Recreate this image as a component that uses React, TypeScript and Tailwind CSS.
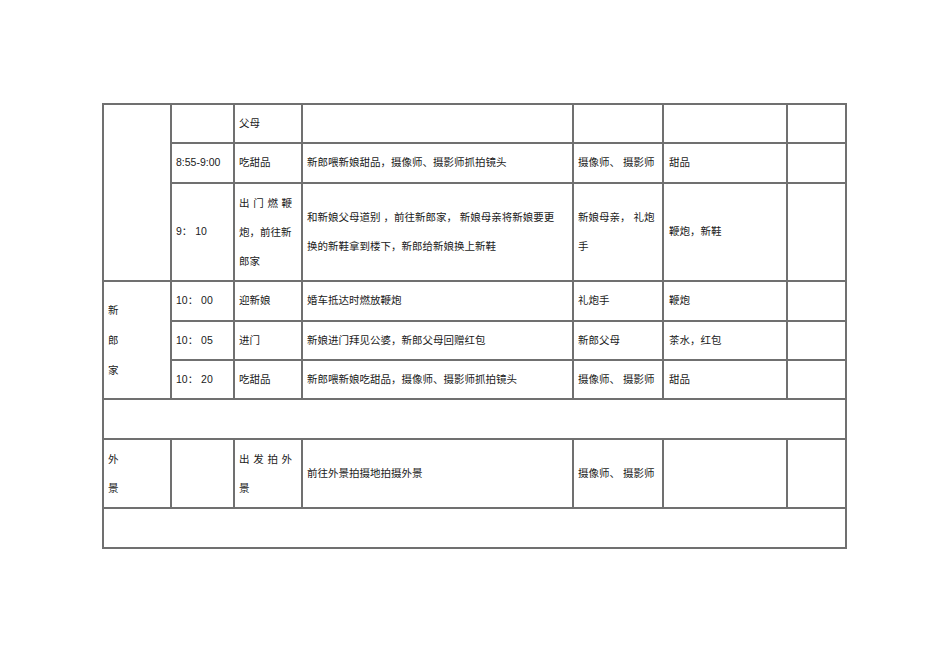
import React from 'react'

const font = { fontFamily: '"Liberation Sans", "Noto Sans CJK SC", sans-serif' }

function Cell({ children, className = '' }: { children?: React.ReactNode; className?: string }) {
  return (
    <div className={`bg-white flex items-center pl-[4px] text-[10.5px] text-[#1a1a1a] whitespace-nowrap ${className}`}>
      <div>{children}</div>
    </div>
  )
}

export default function App() {
  return (
    <div className="w-[950px] h-[672px] bg-white overflow-hidden" style={font}>
      <div className="ml-[102px] mt-[103px] w-[745px] grid grid-cols-[66px_61px_66px_269px_88px_122px_57px] grid-rows-[37px_38px_96px_38px_37px_37px_38px_67px_38px] gap-[2px] p-[2px] bg-[#707070]">
        {/* rows 1-3 */}
        <Cell className="row-span-3" />
        <Cell />
        <Cell>父母</Cell>
        <Cell />
        <Cell />
        <Cell />
        <Cell />

        <Cell className="pl-[3px]">8:55-9:00</Cell>
        <Cell>吃甜品</Cell>
        <Cell>新郎喂新娘甜品，摄像师、摄影师抓拍镜头</Cell>
        <Cell>摄像师、 摄影师</Cell>
        <Cell className="pl-[5px]">甜品</Cell>
        <Cell />

        <Cell className="pl-[3px]">9： 10</Cell>
        <Cell className="leading-[29px]">
          <div className="tracking-[3.7px]">出门燃鞭</div>
          <div>炮，前往新</div>
          <div>郎家</div>
        </Cell>
        <Cell className="leading-[29px]">
          <div>和新娘父母道别 ，前往新郎家， 新娘母亲将新娘要更</div>
          <div>换的新鞋拿到楼下，新郎给新娘换上新鞋</div>
        </Cell>
        <Cell className="leading-[29px]">
          <div>新娘母亲， 礼炮</div>
          <div>手</div>
        </Cell>
        <Cell className="pl-[5px]">鞭炮，新鞋</Cell>
        <Cell />

        {/* 新郎家 */}
        <Cell className="row-span-3 leading-[30px]">
          <div>新</div>
          <div>郎</div>
          <div>家</div>
        </Cell>
        <Cell className="pl-[3px]">10： 00</Cell>
        <Cell>迎新娘</Cell>
        <Cell>婚车抵达时燃放鞭炮</Cell>
        <Cell>礼炮手</Cell>
        <Cell className="pl-[5px]">鞭炮</Cell>
        <Cell />

        <Cell className="pl-[3px]">10： 05</Cell>
        <Cell>进门</Cell>
        <Cell>新娘进门拜见公婆，新郎父母回赠红包</Cell>
        <Cell>新郎父母</Cell>
        <Cell className="pl-[5px]">茶水，红包</Cell>
        <Cell />

        <Cell className="pl-[3px]">10： 20</Cell>
        <Cell>吃甜品</Cell>
        <Cell>新郎喂新娘吃甜品，摄像师、摄影师抓拍镜头</Cell>
        <Cell>摄像师、 摄影师</Cell>
        <Cell className="pl-[5px]">甜品</Cell>
        <Cell />

        <Cell className="col-span-7" />

        {/* 外景 */}
        <Cell className="leading-[29px]">
          <div>外</div>
          <div>景</div>
        </Cell>
        <Cell />
        <Cell className="leading-[29px]">
          <div className="tracking-[3.7px]">出发拍外</div>
          <div>景</div>
        </Cell>
        <Cell>前往外景拍摄地拍摄外景</Cell>
        <Cell>摄像师、 摄影师</Cell>
        <Cell />
        <Cell />

        <Cell className="col-span-7" />
      </div>
    </div>
  )
}
